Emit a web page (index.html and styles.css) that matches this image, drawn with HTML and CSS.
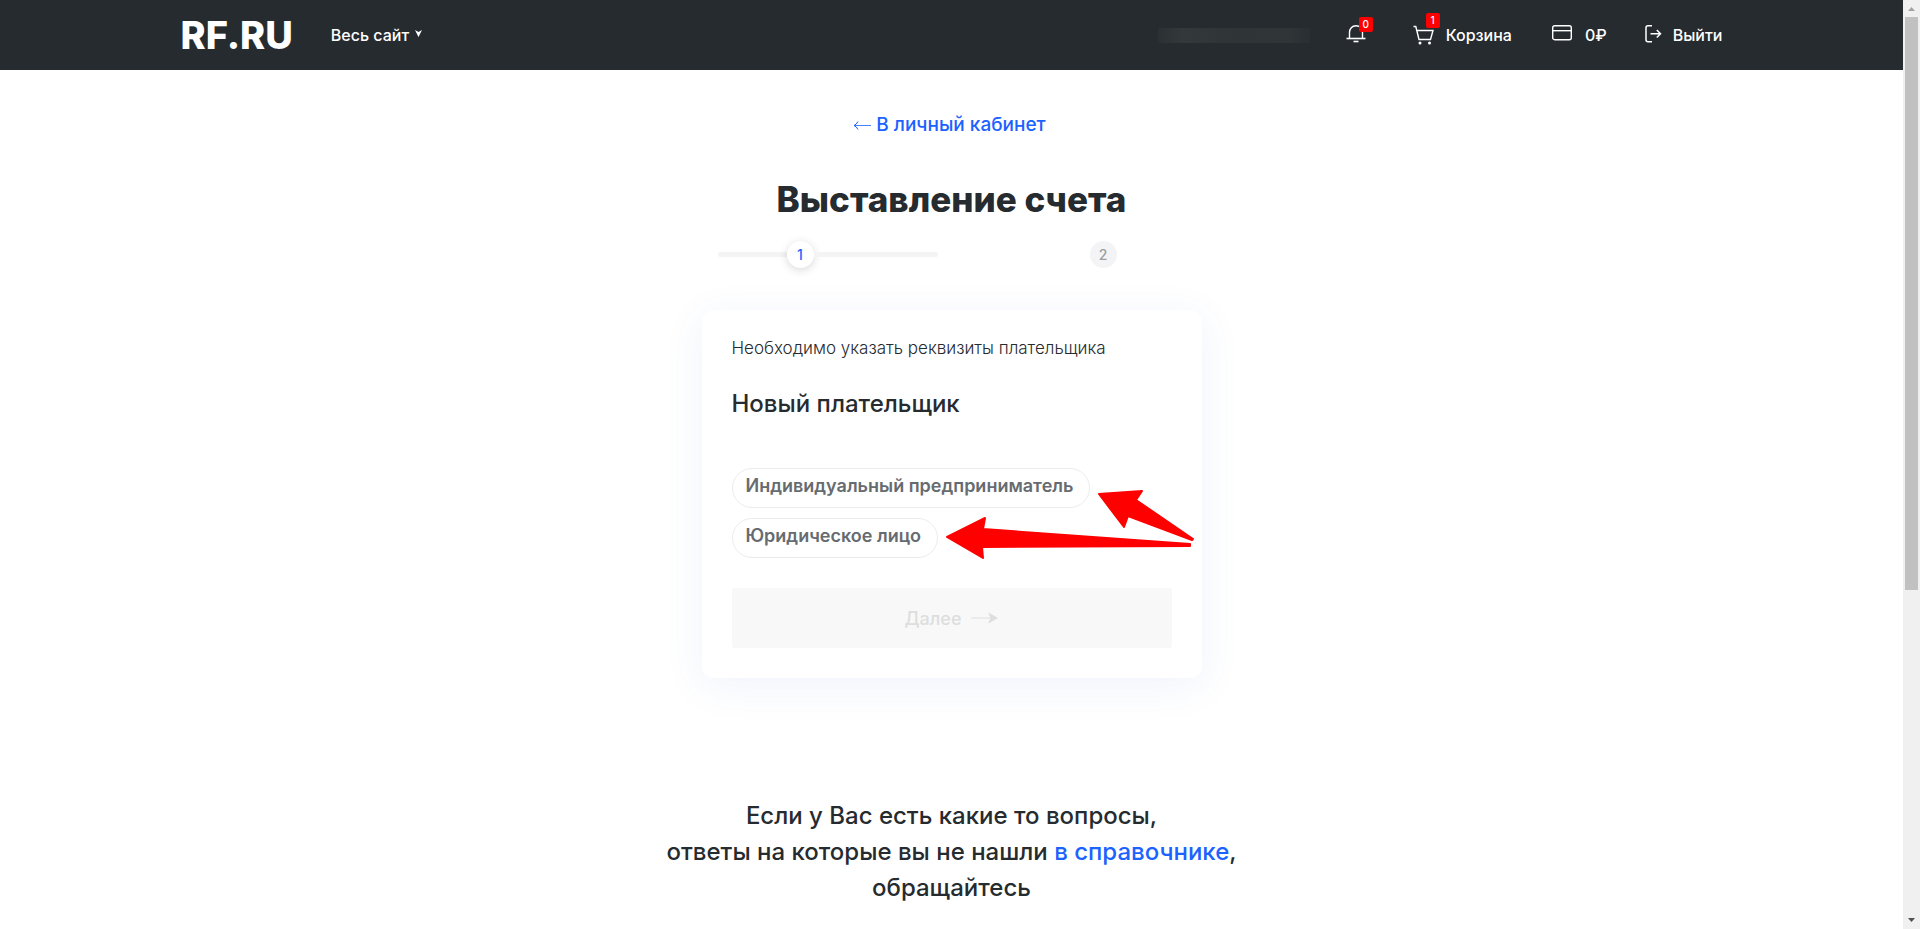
FILE: index.html
```html
<!DOCTYPE html>
<html lang="ru">
<head>
<meta charset="utf-8">
<title>Выставление счета</title>
<link rel="stylesheet" href="styles.css">
</head>
<body>
<div class="window">
  <div class="page">
    <header class="header">
      <div class="header-inner">
        <a class="logo" href="#">RF.RU</a>
        <button class="site-menu" type="button">Весь сайт
          <svg width="7" height="12" viewBox="0 0 7 12"><path d="M0 1 3.500 3 7 1 3.500 8z" fill="#fff"/></svg>
        </button>
        <nav class="nav">
          <span class="user"></span>
          <a class="nav-item bell" href="#" aria-label="Уведомления">
            <svg width="20" height="20" viewBox="0 0 20 20" fill="none" stroke="#fff"><path d="M3.500 13V7.500C3.500 3.500 6 .8 10 .8s6.500 2.700 6.500 6.700V13" stroke-width="1.400"/><path d="M.5 13.500h19" stroke-width="1.600"/><path d="M7.500 16.500h5" stroke-width="1.600"/></svg>
            <span class="badge">0</span>
          </a>
          <a class="nav-item cart" href="#">
            <svg width="21" height="20" viewBox="0 0 21 20" fill="none" stroke="#fff" stroke-width="1.400"><path d="M.5 1.500h2.300L6 14.500h11.500L20 5.500H4"/><circle cx="7" cy="18" r="1.500" fill="#fff" stroke="none"/><circle cx="16.500" cy="18" r="1.500" fill="#fff" stroke="none"/></svg>
            <span class="badge">1</span>
            <span>Корзина</span>
          </a>
          <a class="nav-item balance" href="#">
            <svg width="20" height="20" viewBox="0 0 20 20" fill="none" stroke="#fff" stroke-width="1.400"><rect x=".7" y=".7" width="18.600" height="14" rx="2"/><path d="M.7 5.700h18.600"/></svg>
            <span>0₽</span>
          </a>
          <a class="nav-item exit" href="#">
            <svg width="17" height="20" viewBox="0 0 17 20" fill="none" stroke="#fff" stroke-width="1.500"><path d="M7 .8H3q-2 0-2 2v12q0 2 2 2h4M5.500 8.800h10M11.800 5 15.500 8.800l-3.700 3.800"/></svg>
            <span>Выйти</span>
          </a>
        </nav>
      </div>
    </header>

    <main class="main">
      <a class="back" href="#">
        <svg width="18" height="9" viewBox="0 0 18 9" fill="none" stroke="#1b62ff"><path d="M18 4.500H1" stroke-width=".8"/><path d="M5 .5Q3.500 3.500 1 4.500q2.500 1 4 4"/></svg>
        <span>В личный кабинет</span>
      </a>
      <h1 class="title">Выставление счета</h1>
      <div class="steps">
        <span class="track track-before"></span>
        <span class="step step-active">1</span>
        <span class="track track-after"></span>
        <span class="step">2</span>
      </div>
      <form class="card">
        <p class="hint">Необходимо указать реквизиты плательщика</p>
        <h2 class="subtitle">Новый плательщик</h2>
        <div class="options">
          <button class="pill" type="button">Индивидуальный предприниматель</button>
          <button class="pill" type="button">Юридическое лицо</button>
        </div>
        <button class="next" type="submit" disabled>
          <span>Далее</span>
          <svg width="27" height="12" viewBox="0 0 27 12"><path d="M0 6h20" stroke="#dddede" fill="none"/><path d="M17 .3 27 6l-10 5.700L19.500 6z" fill="#dddede"/></svg>
        </button>
        <svg class="pointers" width="260" height="80" viewBox="940 485 260 80" fill="#f00" stroke="#f00" stroke-width="2" stroke-linejoin="round"><path d="M1099 494 1142 491 1136 500 1193 539 1192 540 1128 516 1124 527z"/><path d="M947 537 985 518 983 529 1190 544 1190 546 982 547 983 558z"/></svg>
      </form>
      <p class="help">Если у Вас есть какие то вопросы,<br>ответы на которые вы не нашли <a class="help-link" href="#">в справочнике</a>,<br>обращайтесь</p>
    </main>
  </div>
  <div class="scrollbar">
    <svg width="7" height="4" viewBox="0 0 7 4"><path d="M0 4 3.500 0 7 4z" fill="#a3a3a3"/></svg>
    <span class="thumb"></span>
    <svg width="7" height="4" viewBox="0 0 7 4"><path d="M0 0 3.500 4 7 0z" fill="#505050"/></svg>
  </div>
</div>
</body>
</html>
```
FILE: styles.css
```css
* { box-sizing: border-box; }
body {
  margin: 0;
  font-family: Inter, "Liberation Sans", sans-serif;
  color: #262b2f;
  background: #fff;
}
a { text-decoration: none; color: inherit; }
button { font-family: inherit; }
svg { display: block; flex: none; }
h1, h2, p { margin: 0; }

.window { display: grid; grid-template-columns: 1fr 17px; height: 100vh; overflow: hidden; }
.page { overflow: hidden; }

.header { background: #262b2f; color: #fff; }
.header-inner {
  display: flex; align-items: center;
  height: 70px; max-width: 1542px; margin: 0 auto;
}
.logo { font-size: 38px; font-weight: 800; line-height: 44px; }
.site-menu {
  display: flex; align-items: center; gap: 6px;
  margin-left: 38px; padding: 0; border: 0; background: none;
  color: #fff; font-size: 16px; font-weight: 500; line-height: 20px;
}
.nav { display: flex; align-items: center; margin-left: auto; font-size: 16px; font-weight: 500; line-height: 20px; }
.user {
  width: 152px; height: 15px;
  background: linear-gradient(90deg, #2b3033, #33383b 16%, #2f3437 50%, #303538 85%, #292e32);
}
.nav-item { position: relative; display: flex; align-items: center; }
.bell { margin-left: 36px; }
.cart { margin-left: 47px; gap: 12px; }
.balance { margin-left: 40px; gap: 13px; }
.exit { margin-left: 38px; gap: 11px; }
.badge {
  position: absolute; left: 13px; top: -8px;
  width: 14px; height: 15px; border-radius: 2px;
  background: #f00; font-size: 10px; font-weight: 500; line-height: 14px; text-align: center;
}
.cart .badge { top: -12px; }

.main { display: flex; flex-direction: column; align-items: center; padding: 43px 16px 0; }
.back { display: flex; align-items: center; gap: 5px; margin-right: 4px; color: #1b62ff; font-size: 19px; font-weight: 500; line-height: 24px; }
.title { margin-top: 40px; font-size: 35px; font-weight: 800; line-height: 44px; }
.steps { display: flex; align-items: center; width: 100%; max-width: 500px; padding-left: 16px; margin-top: 20px; }
.track { height: 5px; background: #f4f4f5; }
.track-before { width: 69px; border-radius: 3px 0 0 3px; }
.track-after { width: 124px; border-radius: 0 3px 3px 0; margin-right: 152px; }
.step {
  width: 27px; height: 27px; border-radius: 50%;
  background: #f4f4f6; color: #9b9ea0;
  font-size: 14px; font-weight: 500; line-height: 27px; text-align: center;
}
.step-active { background: #fff; color: #1b62ff; box-shadow: 0 2px 8px rgba(38, 43, 47, .18); }

.card {
  position: relative;
  width: 100%; max-width: 500px; margin-top: 42px; padding: 26px 30px 30px;
  border-radius: 12px; background: #fff;
  box-shadow: 0 8px 40px rgba(60, 100, 200, .08);
}
.hint { font-size: 17px; font-weight: 300; line-height: 24px; }
.subtitle { margin-top: 28px; font-size: 24px; font-weight: 500; line-height: 32px; }
.options { display: flex; flex-direction: column; align-items: flex-start; gap: 10px; margin-top: 48px; }
.pill {
  height: 40px; padding: 0 16px 6px 13px; border: 1px solid #ececee; border-radius: 20px; background: #fff;
  color: #666b70; font-size: 18px; font-weight: 600; white-space: nowrap;
}
.next {
  display: flex; align-items: center; justify-content: center; gap: 10px;
  width: 100%; height: 60px; margin-top: 30px; border: 0; border-radius: 3px;
  background: #f8f8f8; color: #dddede; font-size: 18px; font-weight: 500;
}
.pointers { position: absolute; left: 238px; top: 175px; }
.help { margin-top: 120px; font-size: 24px; font-weight: 500; line-height: 36px; text-align: center; }
.help-link { color: #1b62ff; }

.scrollbar { display: flex; flex-direction: column; align-items: center; padding: 7px 0; background: #f0f0f0; }
.thumb { width: 13px; height: 573px; margin: 6px 0 auto; background: #c1c1c1; }
```
